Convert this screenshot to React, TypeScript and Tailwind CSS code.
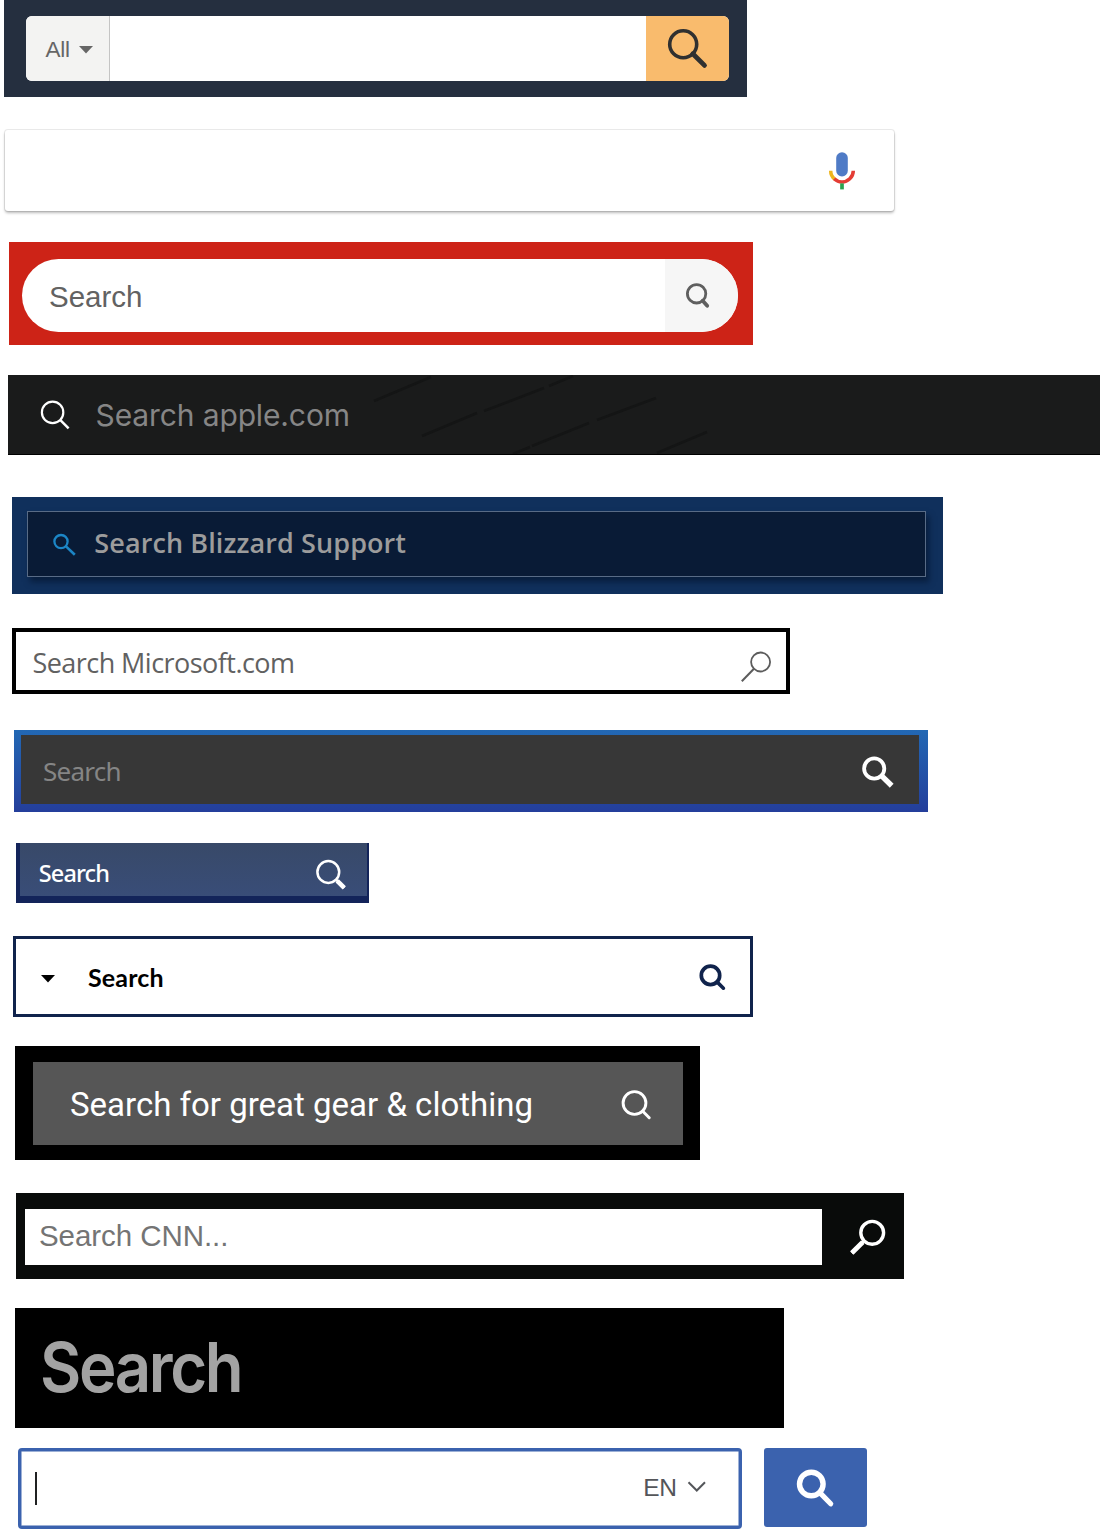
import React from 'react';

type GlassProps = {
  className: string;
  cx: number;
  cy: number;
  r: number;
  ring: number;
  ex: number;
  ey: number;
  handle: number;
  round?: boolean;
  neck?: number;
};

/* Magnifying glass: a ring and a handle that ends at (ex, ey). */
function Glass({ className, cx, cy, r, ring, ex, ey, handle, round, neck = 0 }: GlassProps) {
  const d = Math.hypot(ex - cx, ey - cy);
  const at = (t: number) => [cx + ((ex - cx) * t) / d, cy + ((ey - cy) * t) / d];
  const [sx, sy] = at(r);
  const [nx, ny] = at(r + neck);
  return (
    <svg className={`block shrink-0 ${className}`} fill="none" stroke="currentColor">
      <circle cx={cx} cy={cy} r={r} strokeWidth={ring} />
      {neck > 0 && <line x1={sx} y1={sy} x2={ex} y2={ey} strokeWidth={ring} />}
      <line
        x1={nx}
        y1={ny}
        x2={ex}
        y2={ey}
        strokeWidth={handle}
        strokeLinecap={round ? 'round' : 'butt'}
      />
    </svg>
  );
}

function Caret({ className }: { className: string }) {
  return (
    <svg className={`block h-[8px] w-[14px] shrink-0 ${className}`} viewBox="0 0 14 8" fill="currentColor">
      <path d="M0 0H14L7 7.6Z" />
    </svg>
  );
}

function Mic() {
  return (
    <svg className="mt-[20px] mr-[37px] block h-[40px] w-[30px]" viewBox="0 0 30 40" fill="none">
      <rect x="9.2" y="2.2" width="11.6" height="24.3" rx="5.8" fill="#4f7bc6" />
      <path d="M3.7 20.8C3.7 24.2 5.2 27.2 7.7 29.2" stroke="#eeb51d" strokeWidth="3.5" />
      <path d="M7.2 28.8C11.6 33 18.4 33 22.8 28.8C25 26.8 26.3 24 26.3 20.8" stroke="#e43d35" strokeWidth="3.5" />
      <path d="M15 33.4V39.4" stroke="#2aa24f" strokeWidth="3.7" />
    </svg>
  );
}

export default function App() {
  return (
    <main className="flex h-[1529px] w-[1100px] flex-col items-start overflow-hidden bg-white">
      {/* Department search */}
      <div className="ml-[4px] flex h-[97px] w-[743px] shrink-0 bg-[#252f3f] pt-[16px] pl-[22px]">
        <div className="flex h-[65px] w-[703px] overflow-hidden rounded-[6px] bg-white">
          <div className="flex w-[84px] border-r border-[#c4c4c4] bg-[#f3f3f2] pt-[13px] pl-[19.5px] text-[#666]">
            <span className="w-[33.5px] pt-px font-['Liberation_Sans',sans-serif] text-[22.5px] leading-[40px] tracking-[-0.2px]">
              All
            </span>
            <Caret className="mt-[16.5px]" />
          </div>
          <div className="w-[536px]" />
          <div className="w-[83px] bg-[#f9bb6d] text-[#303030]">
            <Glass className="h-[65px] w-[83px]" cx={37.2} cy={28.3} r={13.5} ring={3.6} ex={58.5} ey={49.4} handle={4.8} round />
          </div>
        </div>
      </div>

      {/* Voice search */}
      <div className="mt-[33px] ml-[5px] flex h-[81px] w-[889px] shrink-0 justify-end rounded-[3px] bg-white shadow-[0_0_0_1px_rgba(0,0,0,0.08),0_2px_3px_rgba(0,0,0,0.27)]">
        <Mic />
      </div>

      {/* Pill search on red */}
      <div className="mt-[31px] ml-[9px] flex h-[103px] w-[744px] shrink-0 bg-[#cd2317] pt-[17px] pl-[13px]">
        <div className="flex h-[73px] w-[716px] overflow-hidden rounded-full bg-white">
          <span className="w-[643px] pt-[18px] pl-[27px] font-['Liberation_Sans',sans-serif] text-[29.5px] leading-[40px] text-[#626262]">
            Search
          </span>
          <div className="w-[73px] bg-[#f6f6f6] text-[#5f5f5f]">
            <Glass className="h-[73px] w-[73px]" cx={31.6} cy={34.8} r={9.2} ring={2.8} ex={42.2} ey={46.8} handle={3.8} round />
          </div>
        </div>
      </div>

      {/* apple.com */}
      <div className="relative mt-[30px] ml-[8px] flex h-[80px] w-[1092px] shrink-0 border-b border-black bg-[#1a1b1b]">
        <svg className="absolute inset-0 h-[79px] w-[1092px]" stroke="#141515" strokeWidth="2.6">
          <path d="M366 26L423 2M414 61L469 38M476 36L536 13M541 11L565 1M505 79L522 72M524 71L581 48M589 45L648 23M649 78L699 57" />
        </svg>
        <Glass className="relative h-[79px] w-[87.6px] text-white" cx={44.6} cy={37.4} r={10.7} ring={2.2} ex={60.6} ey={53.4} handle={2.5} />
        <span className="relative pt-[20px] font-[Inter,sans-serif] text-[30px] leading-[40px] tracking-[-0.13px] text-[#868686]">
          Search apple.com
        </span>
      </div>

      {/* Blizzard Support */}
      <div className="mt-[42px] ml-[12px] h-[97px] w-[931px] shrink-0 bg-[#10305c] pt-[14px] pl-[15px]">
        <div className="flex h-[66px] w-[899px] border border-[#586b86] bg-[#091b36] shadow-[3px_5px_6px_rgba(4,18,42,0.6)]">
          <Glass className="h-[64px] w-[66.3px] text-[#1c86c6]" cx={33} cy={29.6} r={6.6} ring={2.3} ex={46.8} ey={42.8} handle={2.6} />
          <span className="pt-[11px] font-['Open_Sans',sans-serif] text-[27px] leading-[40px] font-semibold tracking-[0.1px] text-[#9c9c9c]">
            Search Blizzard Support
          </span>
        </div>
      </div>

      {/* Microsoft.com */}
      <div className="mt-[34px] ml-[12px] flex h-[66px] w-[778px] shrink-0 justify-between border-[4px] border-black bg-white">
        <span className="pt-[11px] pl-[16.4px] font-['Open_Sans',sans-serif] text-[27px] leading-[40px] tracking-[-0.54px] text-[#616161]">
          Search Microsoft.com
        </span>
        <Glass className="h-[58px] w-[60px] text-[#5c5c5c]" cx={34.6} cy={30} r={9.5} ring={1.8} ex={15.8} ey={49.2} handle={2} />
      </div>

      {/* Dark field in a blue frame */}
      <div className="mt-[36px] ml-[14px] h-[82px] w-[914px] shrink-0 bg-linear-to-b from-[#2268b4] to-[#243e9b] pt-[5px] pl-[7px]">
        <div className="flex h-[69px] w-[898px] justify-between bg-[#373737]">
          <span className="pt-[16px] pl-[22px] font-['Noto_Sans',sans-serif] text-[26px] leading-[40px] font-normal tracking-[-0.75px] text-[#858585]">
            Search
          </span>
          <Glass className="h-[69px] w-[69px] text-white" cx={24.2} cy={33.5} r={10.1} ring={3.8} ex={41.7} ey={50.7} handle={5.4} />
        </div>
      </div>

      {/* Compact navy field */}
      <div className="mt-[31px] ml-[16px] h-[60px] w-[353px] shrink-0 bg-[#13245a] pl-[4px]">
        <div className="flex h-[53px] w-[347px] justify-between bg-linear-to-b from-[#384968] to-[#394d78]">
          <span className="pt-[9.5px] pl-[18.7px] font-['Noto_Sans',sans-serif] text-[23.5px] leading-[40px] font-medium tracking-[-0.85px] text-white">
            Search
          </span>
          <Glass className="h-[53px] w-[67px] text-white" cx={28.3} cy={29} r={10.9} ring={2.5} ex={44.3} ey={44.8} handle={4.6} neck={1.6} />
        </div>
      </div>

      {/* Outlined field with a category caret */}
      <div className="mt-[33px] ml-[13px] flex h-[81px] w-[740px] shrink-0 border-[3px] border-[#10234c] bg-white">
        <Caret className="mt-[36px] ml-[25px]" />
        <span className="w-[600px] pt-[18px] pl-[33px] font-[Lato,sans-serif] text-[25px] leading-[40px] font-bold tracking-[0.15px] text-black">
          Search
        </span>
        <Glass className="h-[75px] w-[80px] text-[#10234c]" cx={55.5} cy={36.4} r={9.2} ring={3.7} ex={68.4} ey={49.2} handle={3.6} round />
      </div>

      {/* Gear and clothing */}
      <div className="mt-[29px] ml-[15px] h-[114px] w-[685px] shrink-0 bg-black pt-[16px] pl-[18px]">
        <div className="flex h-[83px] w-[650px] justify-between bg-[#565656] text-white">
          <span className="pt-[23px] pl-[37px] font-[Roboto,sans-serif] text-[33px] leading-[40px] whitespace-nowrap">
            Search for great gear &amp; clothing
          </span>
          <Glass className="h-[83px] w-[83px]" cx={34.5} cy={41} r={11.4} ring={2.9} ex={49.2} ey={55.7} handle={3} round />
        </div>
      </div>

      {/* CNN */}
      <div className="mt-[33px] ml-[16px] flex h-[86px] w-[888px] shrink-0 bg-[#090b0a] pl-[9px]">
        <div className="mt-[16px] h-[56px] w-[797px] bg-white pt-[7px] pl-[14px] font-['Liberation_Sans',sans-serif] text-[29.5px] leading-[40px] tracking-[-0.06px] text-[#747474]">
          Search CNN...
        </div>
        <Glass className="h-[86px] w-[82px] text-white" cx={50.2} cy={39.8} r={11.4} ring={3.4} ex={29.8} ey={60} handle={4.8} neck={2} />
      </div>

      {/* Large placeholder */}
      <div className="mt-[29px] ml-[15px] h-[120px] w-[769px] shrink-0 bg-black pt-[38px] pl-[25px]">
        <span className="inline-block origin-left scale-x-[0.92] font-[Inter,sans-serif] text-[69px] leading-[42px] font-semibold tracking-[-2.6px] text-[#a3a3a3]">
          Search
        </span>
      </div>

      {/* Language search */}
      <div className="mt-[20px] ml-[18px] flex shrink-0">
        <div className="flex h-[81px] w-[724px] rounded-[4px] border-[3px] border-[#3b62ae] bg-white text-[#54565a] shadow-[inset_0_0_0_0.5px_#3b62ae]">
          <div className="mt-[21px] ml-[14px] h-[33px] w-[2px] bg-[#202122]" />
          <span className="ml-[606.3px] w-[33px] pt-[17px] font-['Liberation_Sans',sans-serif] text-[24.5px] leading-[40px] tracking-[-0.3px]">
            EN
          </span>
          <svg className="mt-[30px] ml-[11px] block h-[12px] w-[20px]" viewBox="0 0 20 12" fill="none" stroke="currentColor" strokeWidth="2">
            <path d="M1.5 1.2L9.8 9.5L18 1.2" />
          </svg>
        </div>
        <div className="ml-[22px] h-[79px] w-[103px] rounded-[3px] bg-[#3b62ae] text-white">
          <Glass className="h-[79px] w-[103px]" cx={47.3} cy={36} r={11.8} ring={5.4} ex={66.7} ey={55.8} handle={5.2} round />
        </div>
      </div>
    </main>
  );
}
